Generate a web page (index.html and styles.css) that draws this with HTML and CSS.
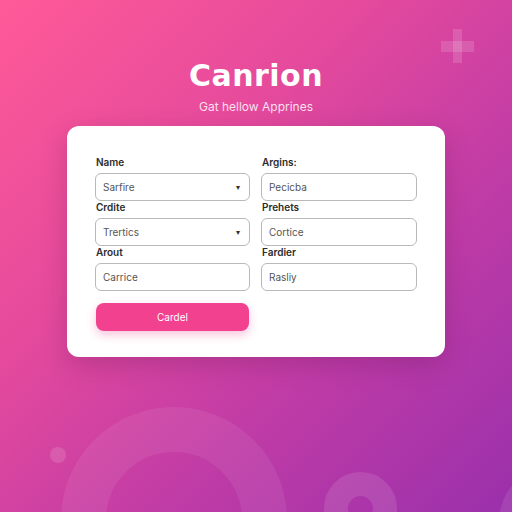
FILE: index.html
```html
<!DOCTYPE html>
<html>
<head>
<meta charset="utf-8">
<link rel="stylesheet" href="styles.css">
</head>
<body>
<div class="page">
  <div class="deco plus"></div>
  <div class="deco dot"></div>
  <div class="deco ring-big"></div>
  <div class="deco ring-small"></div>
  <div class="deco ring-edge"></div>
  <header class="hero">
    <h1 class="title">Canrion</h1>
    <p class="subtitle">Gat hellow Apprines</p>
  </header>
  <main class="card">
    <div class="grid">
      <div class="field">
        <label class="label">Name</label>
        <div class="input select"><span>Sarfire</span><span class="caret">&#9662;</span></div>
      </div>
      <div class="field">
        <label class="label">Argins:</label>
        <div class="input"><span>Pecicba</span></div>
      </div>
      <div class="field">
        <label class="label">Crdite</label>
        <div class="input select"><span>Trertics</span><span class="caret">&#9662;</span></div>
      </div>
      <div class="field">
        <label class="label">Prehets</label>
        <div class="input"><span>Cortice</span></div>
      </div>
      <div class="field">
        <label class="label">Arout</label>
        <div class="input"><span>Carrice</span></div>
      </div>
      <div class="field">
        <label class="label">Fardier</label>
        <div class="input"><span>Rasliy</span></div>
      </div>
      <div class="actions">
        <button class="btn">Cardel</button>
      </div>
    </div>
  </main>
</div>
</body>
</html>
```
FILE: styles.css
```css
* { box-sizing: border-box; }
html, body { margin: 0; padding: 0; }
body {
  width: 512px;
  height: 512px;
  overflow: hidden;
  font-family: "Inter", "Liberation Sans", sans-serif;
}
.page {
  position: relative;
  width: 512px;
  height: 512px;
  overflow: hidden;
  background: linear-gradient(135deg, #ff5a98 0%, #e54a9c 35%, #c13ca6 65%, #9a30ab 100%);
  display: flex;
  flex-direction: column;
  align-items: center;
  padding-top: 58px;
}
.deco { position: absolute; }
.plus {
  left: 441px; top: 29px; width: 33px; height: 34px;
  background:
    linear-gradient(rgba(255,255,255,0.14), rgba(255,255,255,0.14)) center / 9px 34px no-repeat,
    linear-gradient(rgba(255,255,255,0.14), rgba(255,255,255,0.14)) center / 33px 11px no-repeat;
}
.dot {
  left: 50px; top: 447px; width: 16px; height: 16px; border-radius: 50%;
  background: rgba(255,255,255,0.13);
}
.ring-big {
  left: 61px; top: 407px; width: 226px; height: 226px; border-radius: 50%;
  border: 45px solid rgba(255,255,255,0.07);
}
.ring-small {
  left: 324px; top: 472px; width: 73px; height: 73px; border-radius: 50%;
  border: 24px solid rgba(255,255,255,0.11);
}
.ring-edge {
  left: 499px; top: 463px; width: 120px; height: 120px; border-radius: 50%;
  border: 20px solid rgba(255,255,255,0.09);
}
.hero {
  position: relative;
  text-align: center;
  color: #fff;
}
.title {
  margin: 0;
  font-family: "DejaVu Sans", sans-serif;
  font-weight: 700;
  font-size: 30px;
  line-height: 36px;
  letter-spacing: 0.5px;
}
.subtitle {
  margin: 6px 0 0;
  font-size: 12px;
  line-height: 14px;
  color: rgba(255,255,255,0.85);
}
.card {
  position: relative;
  margin-top: 12px;
  width: 378px;
  background: #fff;
  border-radius: 12px;
  padding: 30px 27px 26px 28px;
  box-shadow: 0 8px 24px rgba(90, 20, 80, 0.25);
}
.grid {
  display: grid;
  grid-template-columns: 155px 156px;
  column-gap: 11px;
}
.field { display: flex; flex-direction: column; }
.label {
  display: block;
  font-size: 10px;
  line-height: 13px;
  font-weight: 600;
  color: #2b2b2b;
  margin-bottom: 4px;
  padding-left: 1px;
}
.input {
  height: 28px;
  border: 1px solid #b9b9b9;
  border-radius: 6px;
  display: flex;
  align-items: center;
  justify-content: space-between;
  padding: 0 9px 0 7px;
  font-size: 10px;
  color: #555;
}
.caret { font-size: 8px; color: #333; }
.actions { grid-column: 1; margin-top: 12px; }
.btn {
  width: 153px;
  margin-left: 1px;
  height: 28px;
  border: none;
  border-radius: 8px;
  background: #f2418f;
  color: #fff;
  font-family: "Inter", sans-serif;
  font-size: 10px;
  font-weight: 400;
  box-shadow: 0 4px 10px rgba(240, 60, 140, 0.3);
}
```
